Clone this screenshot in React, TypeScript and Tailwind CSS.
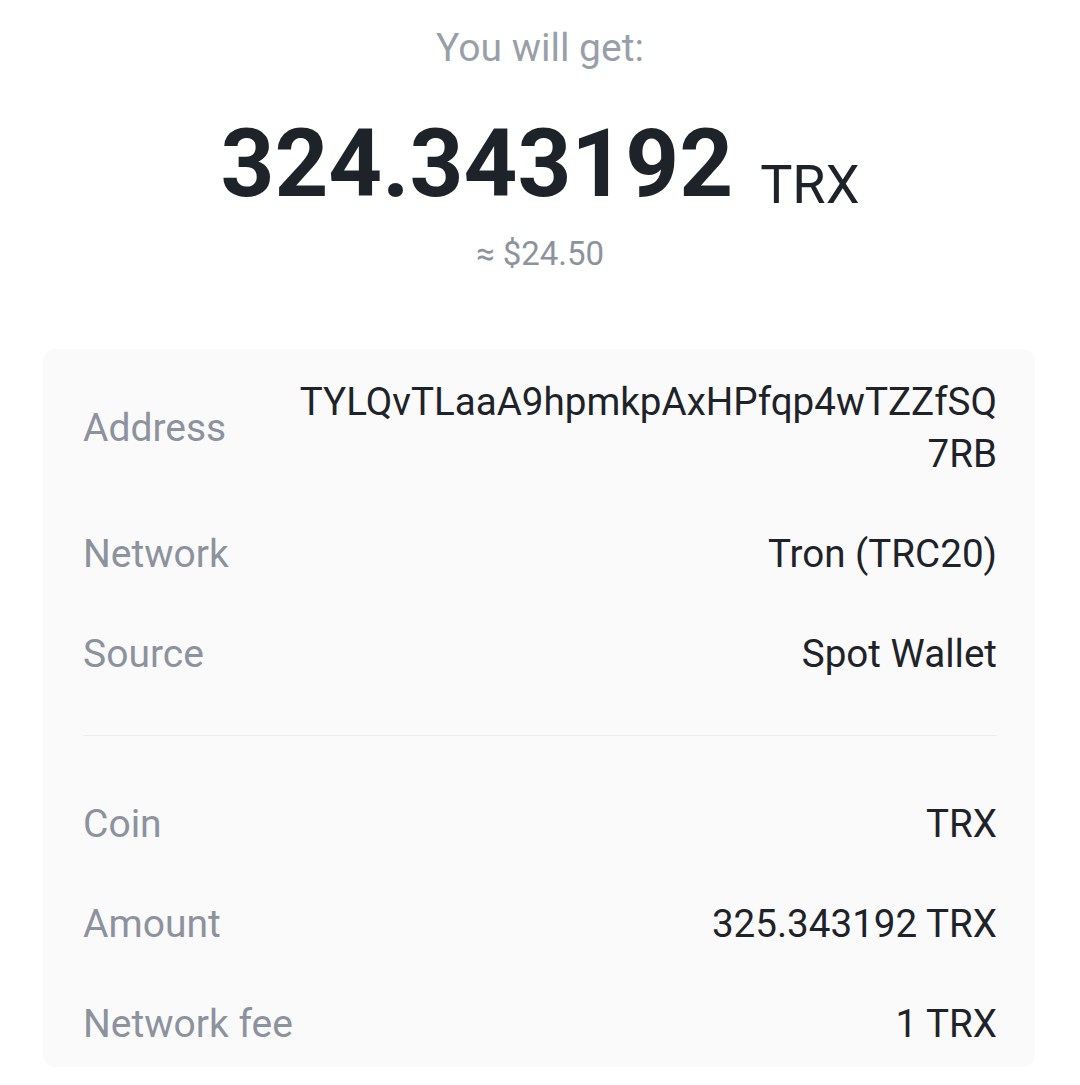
import React from "react";

const Row = ({ label, value, className = "" }: { label: string; value: React.ReactNode; className?: string }) => (
  <div className={`flex items-center justify-between ${className}`}>
    <div className="text-[39px] leading-[52px] text-[#8c939e]">{label}</div>
    <div className="text-right text-[38.6px] leading-[52px] text-[#1e2329]">{value}</div>
  </div>
);

export default function App() {
  return (
    <div
      className="w-[1080px] h-[1085px] overflow-hidden bg-white"
      style={{ fontFamily: "Roboto, 'Liberation Sans', sans-serif" }}
    >
      <div className="flex flex-col items-center pt-[29px]">
        <div className="text-[39px] leading-[39px] text-[#999fa9]">You will get:</div>
        <div className="mt-[49px] flex items-baseline">
          <span className="text-[94px] leading-none font-bold text-[#1e2329]">324.343192</span>
          <span className="ml-[27px] text-[54px] leading-none text-[#1e2329] translate-y-[7px]">TRX</span>
        </div>
        <div className="mt-[26px] text-[33px] leading-[33px] text-[#8c939e]">≈ $24.50</div>
      </div>

      <div className="ml-[43px] mt-[79px] w-[992px] rounded-[12px] bg-[#fafafa] pt-[27px] pl-[40px] pr-[38px] pb-[17px]">
        <Row
          label="Address"
          value={
            <>
              TYLQvTLaaA9hpmkpAxHPfqp4wTZZfSQ
              <br />
              7RB
            </>
          }
        />
        <Row label="Network" value="Tron (TRC20)" className="mt-[48px]" />
        <Row label="Source" value="Spot Wallet" className="mt-[48px]" />
        <div className="mt-[55px] h-px bg-[#ebedf0]" />
        <Row label="Coin" value="TRX" className="mt-[62px]" />
        <Row label="Amount" value="325.343192 TRX" className="mt-[48px]" />
        <Row label="Network fee" value="1 TRX" className="mt-[48px]" />
      </div>
    </div>
  );
}
